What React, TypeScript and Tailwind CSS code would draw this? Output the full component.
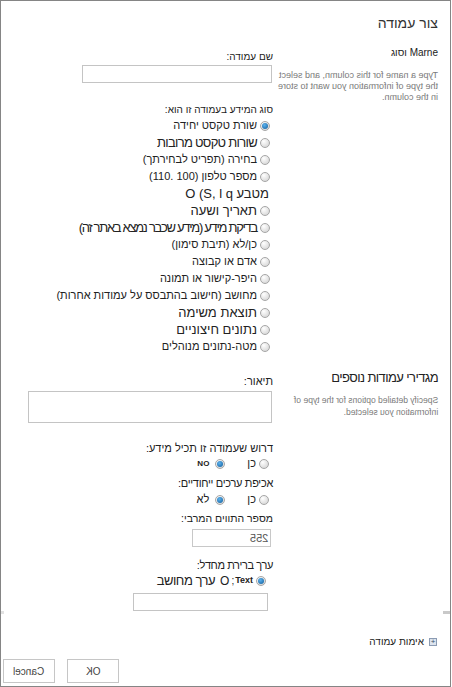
import type { ReactNode } from "react";

function Radio({ checked = false }: { checked?: boolean }) {
  return (
    <span className="flex h-[10px] w-[10px] shrink-0 items-center justify-center rounded-full border border-[#a6a6a6] bg-[radial-gradient(circle_at_35%_30%,#ffffff,#cfcfcf)]">
      {checked && (
        <span className="h-[6px] w-[6px] rounded-full bg-[radial-gradient(circle_at_40%_35%,#5cb2ee,#0f5c9a)]" />
      )}
    </span>
  );
}

// English strings show up mirrored in the reference
function Mirror({ children, className = "" }: { children: ReactNode; className?: string }) {
  return (
    <span dir="ltr" className={"inline-block -scale-x-100 " + className}>
      {children}
    </span>
  );
}

interface TypeOption {
  label: ReactNode;
  size?: "sm" | "lg" | "lgMid" | "lgTight";
  checked?: boolean;
  noRadio?: boolean;
}

const types: TypeOption[] = [
  { label: "שורת טקסט יחידה", checked: true },
  { label: "שורות טקסט מרובות", size: "lgMid" },
  { label: "בחירה (תפריט לבחירתך)" },
  {
    label: (
      <>
        מספר טלפון{" "}
        <span dir="ltr" className="inline-block">
          (110. 100)
        </span>
      </>
    ),
  },
  {
    label: (
      <>
        מטבע{" "}
        <span dir="ltr" className="inline-block">
          O (S, l q
        </span>
      </>
    ),
    size: "lg",
    noRadio: true,
  },
  { label: "תאריך ושעה", size: "lg" },
  { label: "בדיקת מידע (מידע שכבר נמצא באתר זה)", size: "lgTight" },
  { label: "כן/לא (תיבת סימון)" },
  { label: "אדם או קבוצה" },
  { label: "היפר-קישור או תמונה" },
  { label: "מחושב (חישוב בהתבסס על עמודות אחרות)" },
  { label: "תוצאת משימה", size: "lg" },
  { label: "נתונים חיצוניים", size: "lg" },
  { label: "מטה-נתונים מנוהלים" },
];

const sizeClass = {
  sm: "text-[11px]",
  lg: "text-[13px]",
  lgMid: "text-[13px] tracking-[-0.7px]",
  lgTight: "text-[13px] tracking-[-1.3px]",
};

function Label({ children, className = "" }: { children: ReactNode; className?: string }) {
  return <div className={"leading-[14px] whitespace-nowrap text-[#222] " + className}>{children}</div>;
}

export default function App() {
  return (
    <div
      dir="rtl"
      className="flex h-[687px] w-[451px] flex-col border border-[#858585] bg-white font-['Liberation_Sans','DejaVu_Sans',sans-serif] text-[#222]"
    >
      <h1 className="mt-[12px] pr-[12px] text-[14px] leading-[20px] font-normal text-[#333]">צור עמודה</h1>

      {/* name and type */}
      <section className="mt-[12px] flex gap-[13px] pr-[12px]">
        <div className="w-[152px] shrink-0">
          <div className="text-[10px] leading-[16px] text-[#222]">Marne וסוג</div>
          <p className="mt-[9px] text-right">
            <Mirror className="text-left text-[9px] leading-[11px] whitespace-nowrap text-[#7a7a7a]">
              Type a name for this column, and select
              <br />
              the type of information you want to store
              <br />
              in the column.
            </Mirror>
          </p>
        </div>

        <div className="flex w-[245px] flex-col pt-[5px]">
          <Label className="text-[10px]">שם עמודה:</Label>
          <input className="mt-[1px] mr-[1px] h-[18px] w-[190px] border border-[#c4c4c4] bg-white" />
          <Label className="mt-[20px] text-[10px]">סוג המידע בעמודה זו הוא:</Label>
          <div className="flex flex-col">
            {types.map((t, i) => (
              <div key={i} className="flex h-[17px] items-center gap-[3px] pr-[3px]">
                {!t.noRadio && <Radio checked={t.checked} />}
                <span
                  className={
                    "leading-[17px] whitespace-nowrap " +
                    sizeClass[t.size ?? "sm"] +
                    (t.noRadio ? " pr-[1px]" : "")
                  }
                >
                  {t.label}
                </span>
              </div>
            ))}
          </div>
        </div>
      </section>

      {/* additional settings */}
      <section className="mt-[14px] flex gap-[13px] pr-[12px]">
        <div className="w-[152px] shrink-0">
          <div className="text-[13px] leading-[18px] tracking-[-0.6px] whitespace-nowrap text-[#222]">
            מגדירי עמודות נוספים
          </div>
          <p className="mt-[7px] text-right">
            <Mirror className="text-left text-[8.5px] leading-[12px] whitespace-nowrap text-[#7a7a7a]">
              Specify detailed options for the type of
              <br />
              information you selected.
            </Mirror>
          </p>
        </div>

        <div className="flex w-[245px] flex-col pt-[5px]">
          <Label className="text-[11px]">תיאור:</Label>
          <textarea className="mt-[3px] mr-[1px] h-[32px] w-[244px] resize-none border border-[#c4c4c4] bg-white" />

          <Label className="mt-[18px] text-[11px]">דרוש שעמודה זו תכיל מידע:</Label>
          <div className="flex h-[17px] items-center pr-[4px]">
            <Radio />
            <span className="mr-[3px] text-[11px]">כן</span>
            <span className="mr-[22px]">
              <Radio checked />
            </span>
            <span className="mr-[6px] text-[8px] font-bold">NO</span>
          </div>

          <Label className="mt-[4px] text-[11px] tracking-[-0.3px]">אכיפת ערכים ייחודיים:</Label>
          <div className="mt-[1px] flex h-[17px] items-center pr-[4px]">
            <Radio />
            <span className="mr-[3px] text-[11px]">כן</span>
            <span className="mr-[22px]">
              <Radio checked />
            </span>
            <span className="mr-[6px] text-[11px]">לא</span>
          </div>

          <Label className="mt-[3px] text-[10.5px]">מספר התווים המרבי:</Label>
          <div className="mt-[4px] mr-[2px] flex h-[18px] w-[79px] items-center border border-[#c8c8c8] bg-white pr-[2px]">
            <Mirror className="text-[11px] text-[#555]">255</Mirror>
          </div>

          <Label className="mt-[11px] text-[11px] tracking-[-0.4px]">ערך ברירת מחדל:</Label>
          <div className="flex h-[17px] items-center pr-[7px]">
            <Radio checked />
            <span className="mr-[3px] text-[9px] font-bold">Text</span>
            <span className="mr-[1px] text-[10px]">;</span>
            <span className="mr-[2px] text-[12px]">O</span>
            <span className="mr-[5px] text-[13px] tracking-[-0.5px]">ערך מחושב</span>
          </div>
          <input className="mt-[4px] mr-[5px] h-[18px] w-[135px] border border-[#c4c4c4] bg-white" />
        </div>
      </section>

      <div className="flex h-[3px] justify-between">
        <span className="h-[3px] w-[7px] bg-[#c9c9c9]" />
        <span className="h-[3px] w-[3px] bg-[#e2e2e2]" />
      </div>

      <div className="mt-[21px] flex items-center gap-[5px] pr-[13px]">
        <span className="flex h-[8px] w-[8px] items-center justify-center border border-[#8b9bb3] bg-[#dde4ee] text-[8px] leading-none text-[#3c4f6b]">
          +
        </span>
        <span className="text-[10px] leading-[14px]">אימות עמודה</span>
      </div>

      <div className="mt-[10px] flex justify-end gap-[12px] pl-[2px]">
        <button className="flex h-[24px] w-[52px] items-center justify-center border border-[#c6c6c6] bg-white">
          <Mirror className="text-[10px] text-[#444]">OK</Mirror>
        </button>
        <button className="flex h-[24px] w-[52px] items-center justify-center border border-[#c6c6c6] bg-white">
          <Mirror className="text-[10px] text-[#444]">Cancel</Mirror>
        </button>
      </div>
    </div>
  );
}
